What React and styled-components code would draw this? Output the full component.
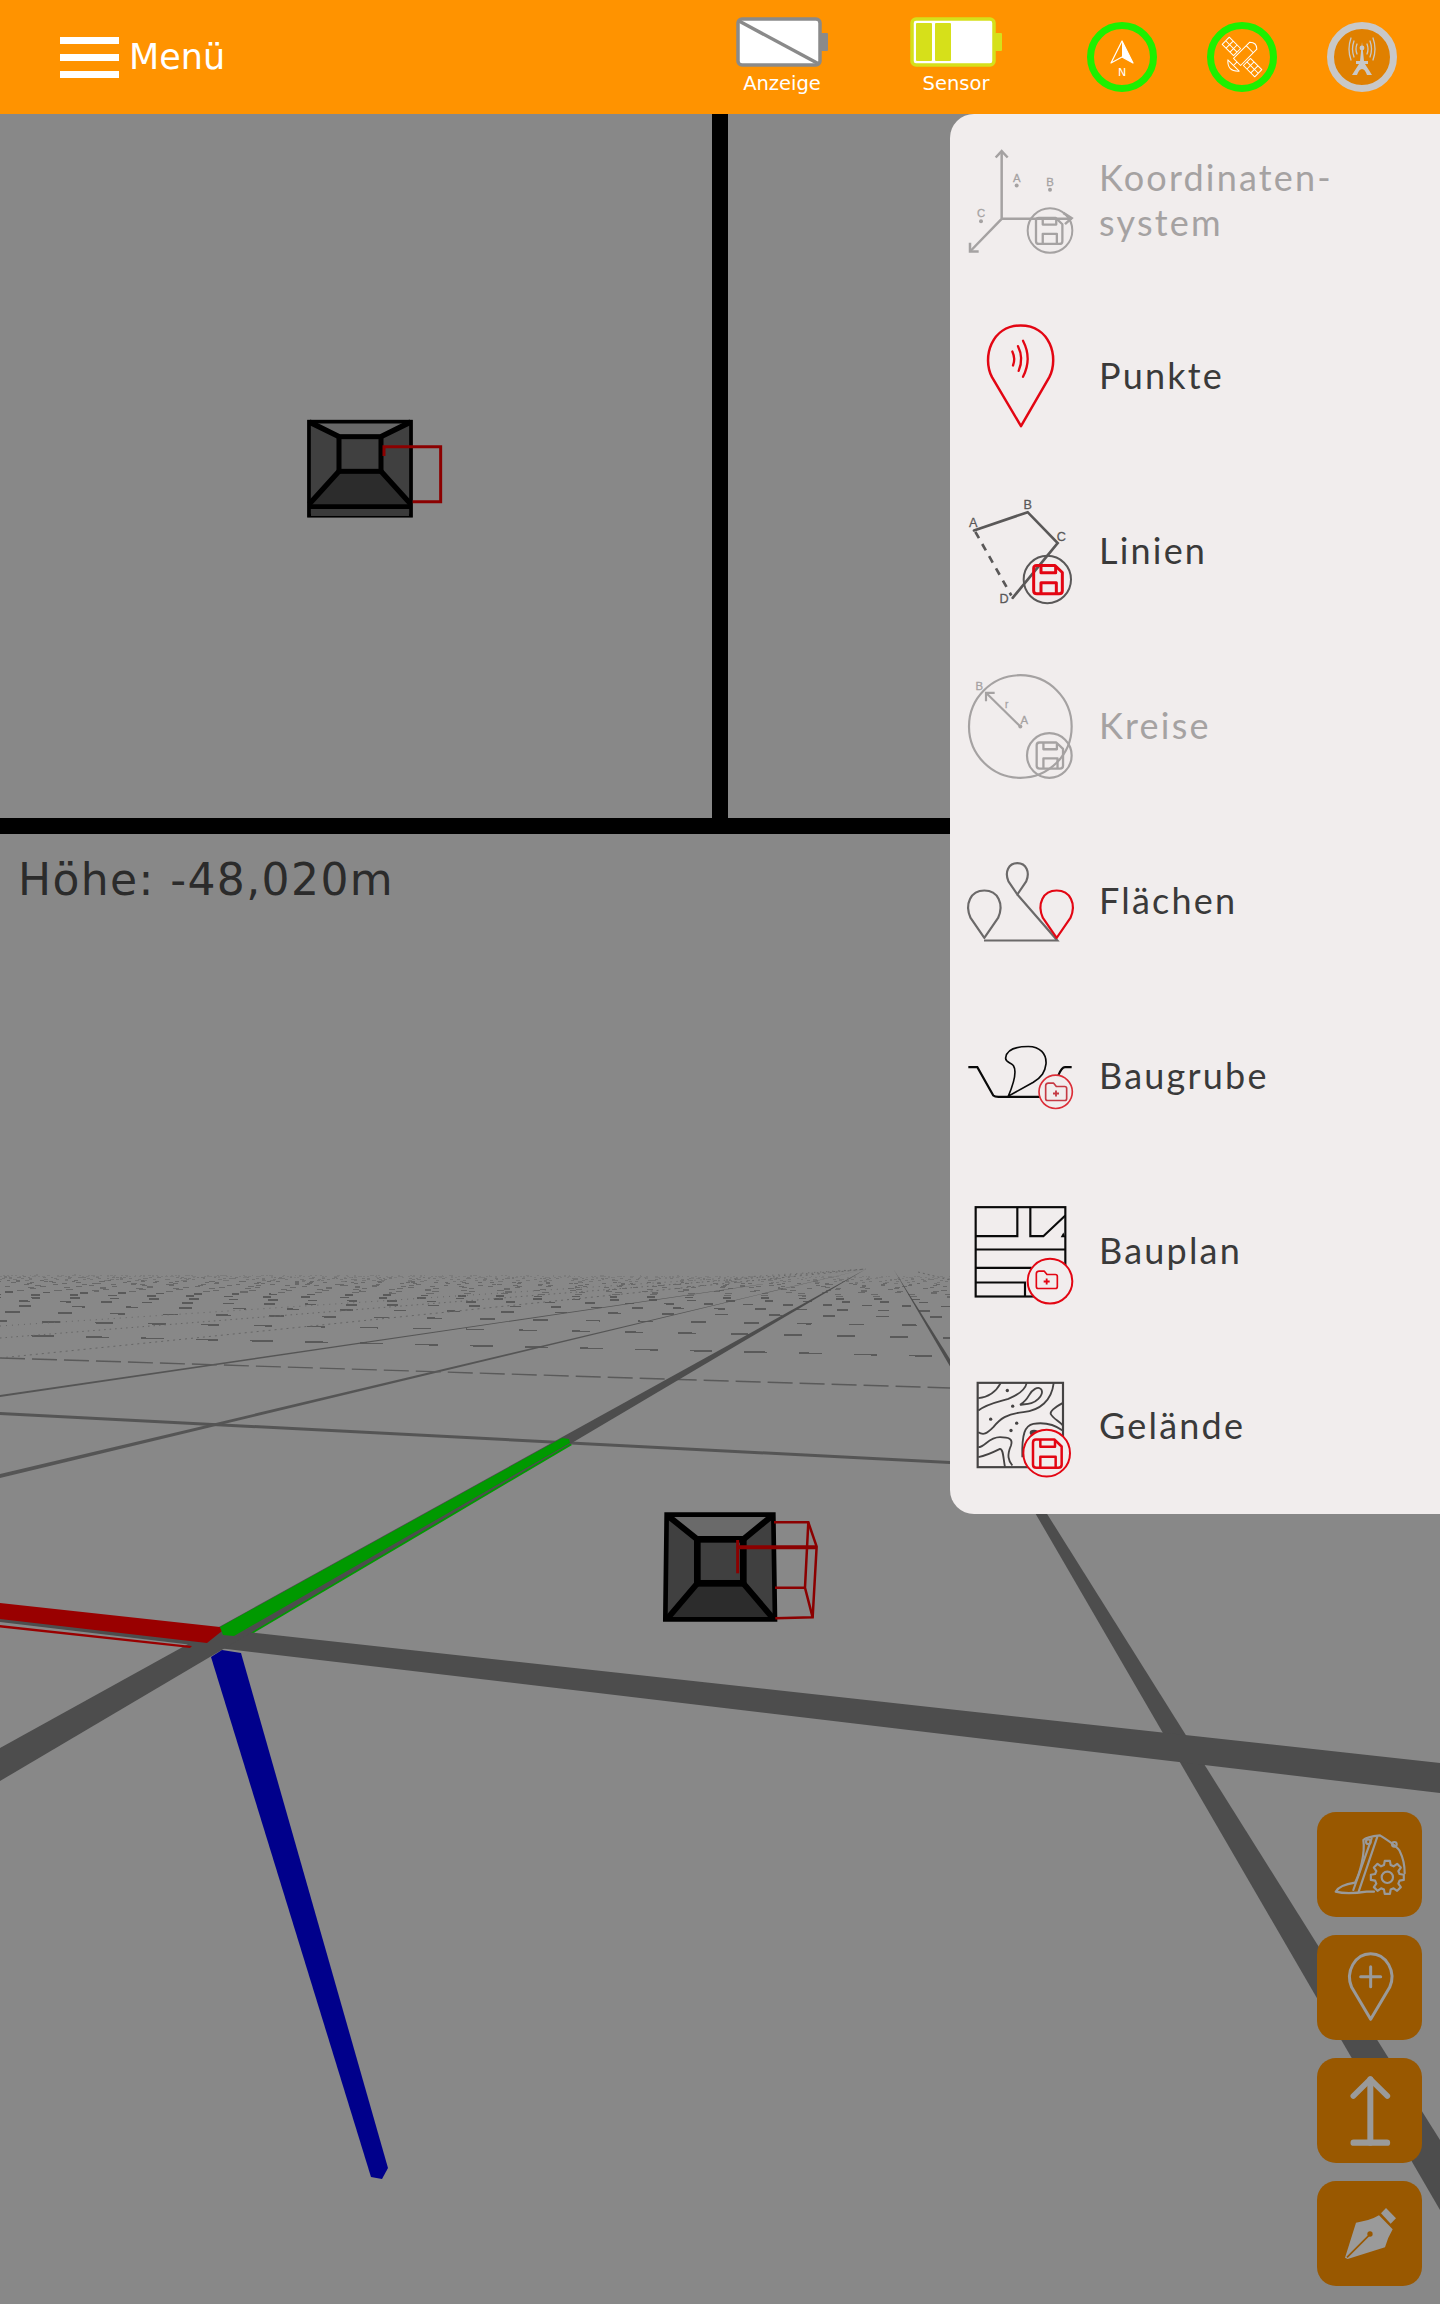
import React from "react";
import styled, { createGlobalStyle } from "styled-components";

const GlobalStyle = createGlobalStyle`
  html, body { margin: 0; padding: 0; background: #888888; }
  #root { width: 1440px; }
  * { box-sizing: border-box; }
`;

const RED = "#e30613";
const DIS = "#a5a2a2";
const DARK = "#5a5858";
const BLK = "#0a0a0a";

const Page = styled.div`
  width: 1440px;
  height: 2304px;
  display: flex;
  flex-direction: column;
  font-family: "DejaVu Sans", sans-serif;
  overflow: hidden;
`;

const Header = styled.header`
  height: 114px;
  flex: none;
  background: #ff9300;
  display: flex;
  justify-content: space-between;
  padding: 0 43px 0 60px;
`;

const MenuButton = styled.div`
  display: flex;
  align-items: center;
  gap: 10px;
  color: #fff;
  font-size: 35px;
`;

const Burger = styled.div`
  width: 59px;
  display: flex;
  flex-direction: column;
  gap: 10px;
`;

const BurgerBar = styled.span`
  display: block;
  height: 7px;
  background: #fff;
`;

const StatusArea = styled.div`
  display: flex;
  align-items: flex-start;
`;

const BatteryBlock = styled.div`
  width: 92px;
  margin-right: ${(p) => p.$mr}px;
  padding-top: 17px;
  display: flex;
  flex-direction: column;
  align-items: center;
  color: #fff;
  font-size: 19.5px;
  line-height: 24px;
`;

const BatteryLabel = styled.span`
  margin-top: 5px;
`;

const StatusRing = styled.div`
  width: 70px;
  height: 70px;
  margin: 22px 0 0 ${(p) => p.$ml}px;
  border-radius: 50%;
  border: 7px solid ${(p) => p.$ring};
  background: ${(p) => p.$fill || "transparent"};
  display: flex;
  align-items: center;
  justify-content: center;
`;

const Stage = styled.main`
  position: relative;
  flex: 1;
  display: grid;
  grid-template-columns: 712px 1fr;
  grid-template-rows: 704px 1fr;
  gap: 16px;
  background: #000;
`;

const View = styled.section`
  position: relative;
  background: #888888;
  grid-column: ${(p) => (p.$wide ? "1 / -1" : "auto")};
  overflow: hidden;
`;

const SceneSvg = styled.svg`
  display: block;
  width: 100%;
  height: 100%;
`;

const HeightReadout = styled.div`
  position: absolute;
  left: 18px;
  top: 18px;
  font-size: 44px;
  line-height: 56px;
  letter-spacing: 1.4px;
  color: #2b2b2b;
`;

const Panel = styled.nav`
  position: absolute;
  top: 0;
  right: 0;
  width: 490px;
  background: #f1eded;
  border-radius: 24px 0 0 24px;
`;

const Row = styled.div`
  height: 175px;
  padding-left: 10px;
  display: flex;
  align-items: center;
  gap: 19px;
`;

const RowIcon = styled.svg`
  display: block;
  width: 120px;
  height: 120px;
  flex: none;
  overflow: visible;
`;

const RowLabel = styled.span`
  margin-top: -3px;
  font-family: "Lato", sans-serif;
  font-size: 36px;
  line-height: 45px;
  letter-spacing: 2.2px;
  color: ${(p) => (p.$off ? DIS : "#3a3a3a")};
`;

const FabColumn = styled.div`
  position: absolute;
  right: 18px;
  bottom: 18px;
  display: flex;
  flex-direction: column;
  gap: 18px;
`;

const Fab = styled.div`
  width: 105px;
  height: 105px;
  border-radius: 19px;
  background: #995800;
`;

const FabIcon = styled.svg`
  display: block;
  width: 105px;
  height: 105px;
`;

const Floppy = ({ x, y, s = 1, c, w = 7.5 }) => (
  <g transform={`translate(${x} ${y}) scale(${s})`} fill="none" stroke={c} strokeWidth={w} strokeLinejoin="round">
    <path d="M9 0H64L86 21V76Q86 85 76 85H10Q0 85 0 76V9Q0 0 9 0Z" />
    <path d="M22 1V22H66V4" />
    <path d="M22 84V52H68V84" />
  </g>
);

const Folder = ({ x, y, c }) => (
  <g transform={`translate(${x} ${y})`} fill="none" stroke={c} strokeWidth="5" strokeLinejoin="round">
    <path d="M0 8Q0 0 8 0H24L32 10H57Q63 10 63 16V46Q63 52 57 52H6Q0 52 0 46Z" />
    <path d="M31 22V40M22 31H40" strokeWidth="5.5" />
  </g>
);

const Pin = ({ tx, ty, w, h, c, sw = 6.5 }) => {
  const r = w / 2;
  return (
    <path
      d={`M${tx} ${ty}L${tx - r * 0.86} ${ty - h * 0.42}C${tx - r * 1.25} ${ty - h * 0.72} ${tx - r * 0.85} ${ty - h} ${tx} ${ty - h}C${tx + r * 0.85} ${ty - h} ${tx + r * 1.25} ${ty - h * 0.72} ${tx + r * 0.86} ${ty - h * 0.42}Z`}
      fill="none"
      stroke={c}
      strokeWidth={sw}
      strokeLinejoin="round"
    />
  );
};

const Label = ({ x, y, c, size = 34, children }) => (
  <text x={x} y={y} fill={c} stroke={c} strokeWidth="0.8" fontSize={size} textAnchor="middle" fontFamily="Liberation Sans, sans-serif">
    {children}
  </text>
);

const IconKoordinaten = () => (
  <RowIcon viewBox="30 79.5 360 360">
    <g fill="none" stroke={DIS} strokeWidth="7.5">
      <path d="M155 108V310H365M155 310L60 408" />
      <path d="M137 126L155 107L173 126M340 292L365 308L345 326M60 382V408H86" />
      <circle cx="300" cy="345" r="67" strokeWidth="6" />
    </g>
    <Floppy x={258} y={307} s={0.92} c={DIS} />
    <g fill={DIS}>
      <circle cx="200" cy="210" r="6" />
      <circle cx="300" cy="223" r="6" />
      <circle cx="93" cy="317" r="6" />
    </g>
    <Label x={200} y={200} c={DIS}>A</Label>
    <Label x={300} y={212} c={DIS}>B</Label>
    <Label x={93} y={305} c={DIS}>C</Label>
  </RowIcon>
);

const IconPunkte = () => (
  <RowIcon viewBox="30 604.5 360 360">
    <path d="M213 932L126 785C95 725 125 630 212 630C300 630 328 725 298 785Z" fill="none" stroke={RED} strokeWidth="7.5" strokeLinejoin="round" />
    <g fill="none" stroke={RED} strokeWidth="7" strokeLinecap="round">
      <path d="M187 708Q197 730 189 750" />
      <path d="M204 692Q222 728 206 766" />
      <path d="M219 676Q247 730 219 784" />
    </g>
  </RowIcon>
);

const IconLinien = () => (
  <RowIcon viewBox="30 94.5 360 360">
    <g fill="none" stroke={DARK} strokeWidth="8" strokeLinecap="round">
      <path d="M72 210L233 155L323 248L188 412" />
      <path d="M76 214L184 405" strokeDasharray="22 20" strokeLinecap="butt" />
      <circle cx="292" cy="357" r="71" strokeWidth="6" />
    </g>
    <Floppy x={251} y={315} c={RED} w={9} />
    <Label x={70} y={200} c={DARK} size={38}>A</Label>
    <Label x={233} y={146} c={DARK} size={38}>B</Label>
    <Label x={334} y={241} c={DARK} size={38}>C</Label>
    <Label x={162} y={427} c={DARK} size={38}>D</Label>
  </RowIcon>
);

const IconKreise = () => (
  <RowIcon viewBox="30 619.5 360 360">
    <g fill="none" stroke={DIS} strokeWidth="6.5">
      <circle cx="211" cy="798" r="154" />
      <circle cx="298" cy="885" r="67" />
      <path d="M211 798L108 697M108 722V697H134" />
    </g>
    <circle cx="211" cy="798" r="6" fill={DIS} />
    <Floppy x={260} y={846} s={0.92} c={DIS} />
    <Label x={88} y={689} c={DIS}>B</Label>
    <Label x={170} y={741} c={DIS} size={30}>r</Label>
    <Label x={223} y={789} c={DIS}>A</Label>
  </RowIcon>
);

const IconFlaechen = () => (
  <RowIcon viewBox="30 124.5 360 360">
    <Pin tx={103} ty={412} w={96} h={142} c="#6b6969" />
    <Pin tx={202} ty={282} w={62} h={94} c="#6b6969" />
    <path d="M202 282L322 420H102" fill="none" stroke="#6b6969" strokeWidth="6.5" />
    <Pin tx={320} ty={412} w={96} h={142} c={RED} />
  </RowIcon>
);

const IconBaugrube = () => (
  <RowIcon viewBox="30 649.5 360 360">
    <g fill="none" stroke={BLK} strokeWidth="6.5">
      <path d="M55 800H82L130 885Q135 890 150 889H272" />
      <path d="M325 825Q335 800 345 800H365" />
      <path d="M175 887C195 840 200 810 190 795C180 785 165 785 167 772C170 745 200 738 235 738C270 738 290 760 288 790C285 815 275 830 250 845Z" strokeWidth="5" />
    </g>
    <circle cx="317" cy="874" r="50" fill="#f1eded" stroke="#dc2c36" strokeWidth="5" />
    <Folder x={287} y={848} c="#c53a44" />
  </RowIcon>
);

const IconBauplan = () => (
  <RowIcon viewBox="30 154.5 360 360">
    <g fill="none" stroke={BLK} strokeWidth="6.5">
      <rect x="77" y="200" width="269" height="268" />
      <path d="M77 287H202V200M241 200V287H280L346 225M77 327H346M77 382H245M77 426H225V468" />
    </g>
    <path d="M332 290L340 276L346 290Z" fill={BLK} />
    <circle cx="300" cy="422" r="67" fill="#f1eded" stroke={RED} strokeWidth="6" />
    <Folder x={259} y={392} c={RED} />
  </RowIcon>
);

const IconGelaende = () => (
  <RowIcon viewBox="30 679.5 360 360">
    <g fill="none" stroke="#454343" strokeWidth="5.5">
      <rect x="83" y="727" width="256" height="253" strokeWidth="6.5" />
      <path d="M85 773C120 770 140 750 152 728" />
      <path d="M85 810C110 790 140 785 175 775C200 765 225 750 230 728" />
      <path d="M210 793C235 790 250 790 265 775C285 755 275 735 255 745C235 755 240 775 210 793Z" />
      <path d="M85 875C100 885 110 880 130 860C150 835 170 820 220 815C270 810 305 780 311 728" />
      <path d="M339 787C315 800 300 810 302 820C310 835 325 840 339 855" />
      <path d="M338 870C310 850 280 845 250 850C225 855 215 880 217 950" />
      <path d="M85 920C105 920 115 890 150 890C175 890 190 895 183 915C170 945 175 960 187 975" />
      <path d="M85 950C110 945 130 935 150 925C160 925 160 955 165 980" />
    </g>
    <g fill="#454343">
      <circle cx="172" cy="750" r="5" />
      <circle cx="188" cy="797" r="5" />
      <circle cx="122" cy="836" r="5" />
      <circle cx="200" cy="848" r="5" />
      <circle cx="183" cy="870" r="5" />
      <ellipse cx="252" cy="877" rx="13" ry="9" />
    </g>
    <circle cx="290" cy="938" r="70" fill="#f1eded" stroke={RED} strokeWidth="6" />
    <Floppy x={249} y={897} c={RED} />
  </RowIcon>
);

const MENU = [
  { id: "k", label: ["Koordinaten-", "system"], off: true, Icon: IconKoordinaten },
  { id: "p", label: ["Punkte"], Icon: IconPunkte },
  { id: "l", label: ["Linien"], Icon: IconLinien },
  { id: "c", label: ["Kreise"], off: true, Icon: IconKreise },
  { id: "f", label: ["Flächen"], Icon: IconFlaechen },
  { id: "b", label: ["Baugrube"], Icon: IconBaugrube },
  { id: "n", label: ["Bauplan"], Icon: IconBauplan },
  { id: "g", label: ["Gelände"], Icon: IconGelaende },
];

const gearPath = (cx, cy, ro, ri, n) => {
  const pts = [];
  for (let i = 0; i < n; i++) {
    const a = (i / n) * Math.PI * 2;
    const s = (Math.PI * 2) / n;
    [[-0.34, ri], [-0.2, ro], [0.2, ro], [0.34, ri]].forEach(([f, r]) => {
      pts.push(`${(cx + r * Math.cos(a + f * s)).toFixed(1)} ${(cy + r * Math.sin(a + f * s)).toFixed(1)}`);
    });
  }
  return `M${pts.join("L")}Z`;
};

const FAB_C = "#9a9a9a";

const FabBucket = () => (
  <FabIcon viewBox="51 66 315 315">
    <g fill="none" stroke={FAB_C} strokeWidth="6.5" strokeLinejoin="round" strokeLinecap="round">
      <path d="M222 305H200Q140 314 107 305C115 290 140 282 165 278C180 250 196 190 190 150Q200 140 240 136C262 150 295 170 300 185C310 205 314 225 314 250" />
      <path d="M232 140L176 305M215 145L160 300" />
      <circle cx="205" cy="155" r="7" />
      <circle cx="283" cy="163" r="7" />
      <path d={gearPath(262, 262, 50, 38, 8)} />
      <circle cx="262" cy="262" r="17" />
    </g>
  </FabIcon>
);

const FabPin = () => (
  <FabIcon viewBox="51 435 315 315">
    <g fill="none" stroke={FAB_C} strokeWidth="9" strokeLinejoin="round" strokeLinecap="round">
      <path d="M212 688L155 592C135 545 165 491 212 491C259 491 290 545 269 592Z" />
      <path d="M212 530V590M182 560H242" />
    </g>
  </FabIcon>
);

const FabUp = () => (
  <FabIcon viewBox="51 804 315 315">
    <g fill="none" stroke={FAB_C} strokeLinecap="round" strokeLinejoin="round">
      <path d="M211 868V1058" strokeWidth="18" />
      <path d="M160 918L211 868L262 918" strokeWidth="17" />
      <path d="M161 1058H261" strokeWidth="19" />
    </g>
  </FabIcon>
);

const FabPen = () => (
  <FabIcon viewBox="51 1173 315 315">
    <path d="M135 1403L168 1298Q210 1292 237 1276L278 1318Q262 1345 255 1372L143 1407Z" fill={FAB_C} />
    <path d="M243 1270L258 1254L288 1285L272 1301Z" fill={FAB_C} />
    <path d="M141 1402L210 1333" stroke="#995800" strokeWidth="5" />
    <circle cx="210" cy="1332" r="8" fill="#995800" />
  </FabIcon>
);

const FABS = [FabBucket, FabPin, FabUp, FabPen];

const Cube = ({ wire }) => (
  <g>
    <rect x="82" y="60" width="316" height="292" fill="#404040" />
    <path d="M90 64H390L300 110H180Z" fill="#686868" />
    <path d="M90 315L178 215H300L392 315Z" fill="#2c2c2c" />
    <g fill="none" stroke="#000">
      <rect x="87" y="65" width="306" height="282" strokeWidth="11" />
      <rect x="177" y="110" width="126" height="104" strokeWidth="15" />
      <path d="M88 66L177 110M392 66L303 110M88 312L177 214M392 312L303 214" strokeWidth="16" />
      <path d="M88 320H392" strokeWidth="14" />
    </g>
    <rect x="93" y="327" width="294" height="21" fill="#3a3a3a" />
    <path d={wire} fill="none" stroke="#8b0000" strokeWidth="9" />
  </g>
);

const Cube3D = () => (
  <g>
    <path d="M80 70H400L405 390H75Z" fill="#404040" />
    <path d="M84 72H396L310 148H172Z" fill="#6a6a6a" />
    <path d="M84 388H400L310 280H172Z" fill="#2c2c2c" />
    <g stroke="#000" fill="none" strokeLinejoin="miter">
      <path d="M80 74H400L405 388H76Z" strokeWidth="14" />
      <rect x="172" y="148" width="138" height="132" strokeWidth="20" />
      <path d="M82 76L172 148M398 76L310 148M82 386L172 280M400 386L310 280" strokeWidth="18" />
    </g>
    <g stroke="#8b0000" fill="none" strokeWidth="7.5">
      <path d="M402 97H505L530 170L518 382L406 385" />
      <path d="M405 293H495L518 382M505 97L495 293" />
      <path d="M290 172H530" strokeWidth="12" />
      <path d="M293 150V250" strokeWidth="9" />
    </g>
  </g>
);

const HORIZON = 1270;
const dashRows = [];
for (let k = 2; k < 48; k++) {
  const dy = 1 / (0.0059 + 0.0036 * k);
  const slope = (0.05 * dy) / 169;
  const yMid = HORIZON + dy;
  const y0 = yMid - slope * 500;
  const y1 = yMid + slope * 450;
  const len = Math.max(1.5, Math.min(24, dy * 0.3));
  const gap = k < 6 ? 26 + k * 3 : k < 14 ? 30 : 24 + (k % 5) * 6;
  dashRows.push({
    k,
    y0,
    y1,
    w: k < 10 ? 1.6 : 1.1,
    dash: `${len.toFixed(1)} ${gap}`,
    offset: (k * 37) % 50,
    color: k < 10 ? "#5a5a5a" : k < 22 ? "#686868" : k < 34 ? "#747474" : "#7c7c7c",
  });
}

const Scene = () => (
  <SceneSvg viewBox="0 834 1440 1470" preserveAspectRatio="none">
    <g fill="none" shapeRendering="crispEdges">
      {dashRows.map((r) => (
        <path key={r.k} d={`M0 ${r.y0.toFixed(1)}L950 ${r.y1.toFixed(1)}`} stroke={r.color} strokeWidth={r.w} strokeDasharray={r.dash} strokeDashoffset={r.offset} />
      ))}
    </g>
    <g fill="#555">
      <polygon points="0,1412 950,1461 950,1464 0,1415" />
      <polygon points="0,1474 866,1269 0,1478" />
      <polygon points="0,1395 866,1269 0,1397" />
    </g>
    <path d="M0 1358L950 1388" stroke="#5a5a5a" strokeWidth="1.4" strokeDasharray="25 7" fill="none" />
    <g fill="none" stroke="#666" strokeWidth="1">
      <path d="M0 1358L866 1269" strokeDasharray="2 4" />
      <path d="M0 1338L866 1269" strokeDasharray="1.5 4" />
      <path d="M0 1326L866 1269" strokeDasharray="1 5" />
      <path d="M918 1272L950 1280" strokeDasharray="2 3" />
    </g>

    <polygon points="894,1270 1440,2140 1440,2210" fill="#4d4d4d" />
    <polygon points="234,1636 252,1634 572,1445 566,1441" fill="#009900" />
    <polygon points="0,1605 1440,1763 1440,1793 0,1622" fill="#4d4d4d" />
    <polygon points="0,1748 866,1269 0,1781" fill="#4d4d4d" />
    <polygon points="0,1625 192,1646 190,1648 0,1627.5" fill="#990000" />
    <polygon points="0,1603 220,1627 222,1631 207,1643 0,1619" fill="#990000" />
    <polygon points="220,1627 562,1438 569,1439 570,1443 234,1636 223,1635" fill="#009900" />
    <polygon points="211,1657 222,1650 241,1653 388,2168 382,2179 371,2177" fill="#00008b" />
    <g transform="translate(640 1490) scale(0.3333)">
      <Cube3D />
    </g>
  </SceneSvg>
);

const TopView = () => (
  <SceneSvg viewBox="0 114 712 704" preserveAspectRatio="none">
    <g transform="translate(280 400) scale(0.3333)">
      <Cube wire="M312 168V140H482V305H398" />
    </g>
  </SceneSvg>
);

const BatteryIcon = ({ kind }) => {
  const line = kind === "grey" ? "#8a8a8a" : "#d6e01a";
  return (
    <svg width="92" height="50" viewBox="0 0 92 50">
      <rect x="2" y="2" width="82" height="46" rx="4" fill="#fff" stroke={line} strokeWidth="3.5" />
      <rect x="85" y="16" width="7" height="18" rx="1" fill={line} />
      {kind === "grey" ? (
        <path d="M3 4L83 47" stroke={line} strokeWidth="3.5" />
      ) : (
        <g fill={line}>
          <rect x="6" y="6" width="16" height="38" rx="1" />
          <rect x="25" y="6" width="16" height="38" rx="1" />
        </g>
      )}
    </svg>
  );
};

const CompassIcon = () => (
  <svg width="56" height="56" viewBox="0 0 56 56">
    <path d="M28 12L17 34L28 28L39 34Z" fill="none" stroke="#fff" strokeWidth="1.2" strokeLinejoin="round" />
    <path d="M28 12L39 34L28 28Z" fill="#fff" />
    <text x="28" y="47" fill="#fff" fontSize="11" textAnchor="middle" fontFamily="DejaVu Sans, sans-serif">N</text>
  </svg>
);

const SatelliteIcon = () => (
  <svg width="56" height="56" viewBox="0 0 56 56">
    <g transform="translate(28 28) rotate(45)" fill="none" stroke="#fff" strokeWidth="1" strokeLinejoin="round">
      <path d="M-23 -5H-7V5H-23ZM-17.500 -5V5M-12 -5V5M-23 0H-7" />
      <path d="M7 -5H23V5H7ZM12 -5V5M17.500 -5V5M7 0H23" />
      <path d="M-5 -16Q0 -21 5 -16V7H-5Z" />
      <path d="M-5 -11H5" />
      <path d="M0 7V12M-8 12Q0 21 8 12Z" />
    </g>
  </svg>
);

const TowerIcon = () => (
  <svg width="56" height="56" viewBox="0 0 56 56">
    <g fill="none" stroke="#c8c8c8" strokeWidth="1.3" strokeLinecap="round">
      <path d="M23 15Q21 20 23 25M33 15Q35 20 33 25" />
      <path d="M20 12Q17 20 20 28M36 12Q39 20 36 28" />
      <path d="M17 9Q13 20 17 31M39 9Q43 20 39 31" />
    </g>
    <path d="M28 13L30 32H34V35H31L38 46H33Q31 40 28 40Q25 40 23 46H18L25 35H22V32H26Z" fill="#c8c8c8" />
    <circle cx="28" cy="19" r="2.4" fill="#c8c8c8" />
  </svg>
);

export default function App() {
  return (
    <Page>
      <GlobalStyle />
      <Header>
        <MenuButton>
          <Burger>
            <BurgerBar />
            <BurgerBar />
            <BurgerBar />
          </Burger>
          Menü
        </MenuButton>
        <StatusArea>
          <BatteryBlock $mr={82}>
            <BatteryIcon kind="grey" />
            <BatteryLabel>Anzeige</BatteryLabel>
          </BatteryBlock>
          <BatteryBlock $mr={35}>
            <BatteryIcon kind="lime" />
            <BatteryLabel>Sensor</BatteryLabel>
          </BatteryBlock>
          <StatusRing $ml={50} $ring="#1cf000">
            <CompassIcon />
          </StatusRing>
          <StatusRing $ml={50} $ring="#1cf000">
            <SatelliteIcon />
          </StatusRing>
          <StatusRing $ml={50} $ring="#c8c8c8" $fill="#e08000">
            <TowerIcon />
          </StatusRing>
        </StatusArea>
      </Header>
      <Stage>
        <View>
          <TopView />
        </View>
        <View />
        <View $wide>
          <Scene />
          <HeightReadout>Höhe: -48,020m</HeightReadout>
        </View>
        <Panel>
          {MENU.map(({ id, label, off, Icon }) => (
            <Row key={id}>
              <Icon />
              <RowLabel $off={off}>
                {label.map((line, i) => (
                  <React.Fragment key={line}>
                    {i > 0 && <br />}
                    {line}
                  </React.Fragment>
                ))}
              </RowLabel>
            </Row>
          ))}
        </Panel>
        <FabColumn>
          {FABS.map((FabGlyph, i) => (
            <Fab key={i}>
              <FabGlyph />
            </Fab>
          ))}
        </FabColumn>
      </Stage>
    </Page>
  );
}
